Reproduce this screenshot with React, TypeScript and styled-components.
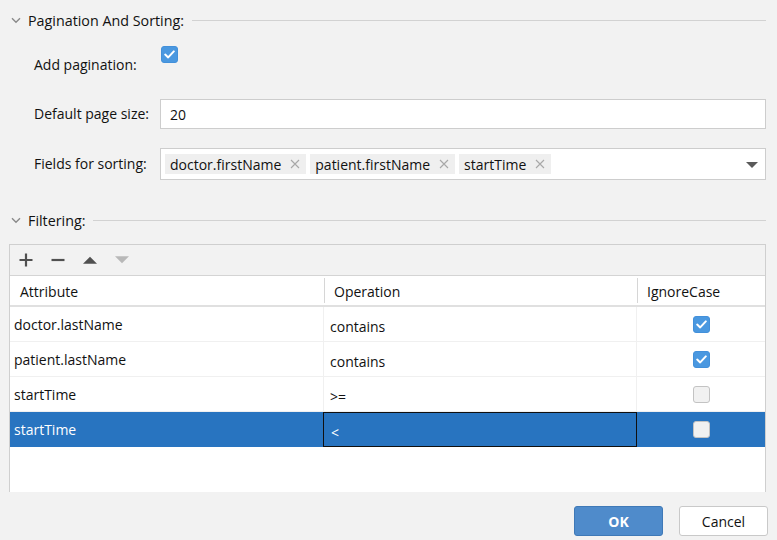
import React from "react";
import styled, { createGlobalStyle } from "styled-components";

const GlobalStyle = createGlobalStyle`
  html, body {
    margin: 0;
    padding: 0;
    background: #f2f2f2;
  }
  body {
    font-family: "Open Sans", "Noto Sans", sans-serif;
    font-size: 14px;
    color: #111;
  }
`;

const Chevron = () => (
  <svg width="10" height="7" viewBox="0 0 10 7">
    <path d="M1 1.2 L5 5.2 L9 1.2" fill="none" stroke="#8a8a8a" strokeWidth="1.4" />
  </svg>
);

const Check = () => (
  <svg width="11" height="9" viewBox="0 0 11 9">
    <path d="M1.2 4.6 L4.2 7.4 L9.8 1.4" fill="none" stroke="#fff" strokeWidth="2" strokeLinecap="round" strokeLinejoin="round" />
  </svg>
);

const Cross = () => (
  <svg width="10" height="10" viewBox="0 0 10 10">
    <path d="M1 1 L9 9 M9 1 L1 9" stroke="#a8a8a8" strokeWidth="1.1" />
  </svg>
);

const sorting = ["doctor.firstName", "patient.firstName", "startTime"];

const filters = [
  { attr: "doctor.lastName", op: "contains", ignore: true },
  { attr: "patient.lastName", op: "contains", ignore: true },
  { attr: "startTime", op: ">=", ignore: false },
  { attr: "startTime", op: "<", ignore: false, selected: true },
];

const App = () => {
  return (
    <>
      <GlobalStyle />
      <Page>
        <SectionHeader $top={10}>
          <Chevron />
          <SectionTitle>Pagination And Sorting:</SectionTitle>
          <Rule />
        </SectionHeader>

        <CheckRow>
          <Label>Add pagination:</Label>
          <CheckBox $checked $raised>
            <Check />
          </CheckBox>
        </CheckRow>

        <FieldRow $top={24}>
          <Label>Default page size:</Label>
          <TextInput>20</TextInput>
        </FieldRow>

        <FieldRow $top={19}>
          <Label>Fields for sorting:</Label>
          <TagInput>
            {sorting.map((s) => (
              <Tag key={s}>
                {s}
                <Cross />
              </Tag>
            ))}
            <DropArrow />
          </TagInput>
        </FieldRow>

        <SectionHeader $top={30}>
          <Chevron />
          <SectionTitle>Filtering:</SectionTitle>
          <Rule />
        </SectionHeader>

        <TablePanel>
          <Toolbar>
            <ToolIcon>
              <svg width="14" height="14" viewBox="0 0 14 14">
                <path d="M7 0.5 V13.5 M0.5 7 H13.5" stroke="#505050" strokeWidth="2.2" />
              </svg>
            </ToolIcon>
            <ToolIcon>
              <svg width="14" height="14" viewBox="0 0 14 14">
                <path d="M0.5 7 H13.5" stroke="#505050" strokeWidth="2.2" />
              </svg>
            </ToolIcon>
            <ToolIcon>
              <svg width="15" height="8" viewBox="0 0 15 8">
                <path d="M0 8 L7.5 0.5 L15 8 Z" fill="#505050" />
              </svg>
            </ToolIcon>
            <ToolIcon>
              <svg width="15" height="8" viewBox="0 0 15 8">
                <path d="M0 0 L7.5 7.5 L15 0 Z" fill="#b8b8b8" />
              </svg>
            </ToolIcon>
          </Toolbar>
          <Grid>
            <HeadCell>Attribute</HeadCell>
            <HeadCell $divider>Operation</HeadCell>
            <HeadCell $divider>IgnoreCase</HeadCell>
            {filters.map((f, i) => (
              <React.Fragment key={i}>
                <Cell $selected={f.selected}>{f.attr}</Cell>
                <OpCell $selected={f.selected}>{f.op}</OpCell>
                <CheckCell $selected={f.selected}>
                  <CheckBox $checked={f.ignore}>{f.ignore && <Check />}</CheckBox>
                </CheckCell>
              </React.Fragment>
            ))}
          </Grid>
        </TablePanel>

        <Buttons>
          <Button $primary>OK</Button>
          <Button>Cancel</Button>
        </Buttons>
      </Page>
    </>
  );
};

export default App;

const Page = styled.div`
  width: 777px;
  height: 540px;
  box-sizing: border-box;
  padding: 0 11px 0 9px;
  display: flex;
  flex-direction: column;
  overflow: hidden;
`;

const SectionHeader = styled.div<{ $top: number }>`
  margin-top: ${(p) => p.$top}px;
  height: 20px;
  display: flex;
  align-items: center;
  padding-left: 2px;

  svg {
    margin-right: 7px;
    margin-top: 1px;
  }
`;

const SectionTitle = styled.span`
  white-space: nowrap;
  font-size: 14.3px;
`;

const Rule = styled.div`
  flex: 1;
  height: 1px;
  background: #d2d2d2;
  margin-left: 8px;
`;

const CheckRow = styled.div`
  margin-top: 16px;
  display: flex;
  align-items: flex-start;
  padding-left: 25px;

  & > span {
    margin-top: 9px;
  }
`;

const Label = styled.span`
  width: 126px;
  flex-shrink: 0;
  white-space: nowrap;
  line-height: 20px;
`;

const CheckBox = styled.div<{ $checked?: boolean; $raised?: boolean }>`
  width: 17px;
  height: 17px;
  box-sizing: border-box;
  border-radius: 3px;
  display: flex;
  align-items: center;
  justify-content: center;
  background: ${(p) => (p.$checked ? "#4a98e0" : "#f1f1f1")};
  border: 1.5px solid ${(p) => (p.$checked ? "#4390da" : "#c3c3c3")};
  margin-left: ${(p) => (p.$raised ? "1px" : "0")};
`;

const FieldRow = styled.div<{ $top: number }>`
  margin-top: ${(p) => p.$top}px;
  display: flex;
  align-items: center;
  padding-left: 25px;
`;

const TextInput = styled.div`
  flex: 1;
  height: 30px;
  box-sizing: border-box;
  background: #fff;
  border: 1px solid #cdcdcd;
  display: flex;
  align-items: center;
  padding-left: 9px;
`;

const TagInput = styled.div`
  flex: 1;
  height: 32px;
  box-sizing: border-box;
  background: #fff;
  border: 1px solid #cdcdcd;
  display: flex;
  align-items: center;
  gap: 4px;
  padding: 0 0 0 4px;
`;

const Tag = styled.span`
  height: 20px;
  background: #efefef;
  display: flex;
  align-items: center;
  gap: 9px;
  padding: 0 6px 0 5px;
  white-space: nowrap;
`;

const DropArrow = styled.span`
  margin-left: auto;
  margin-right: 7px;
  width: 0;
  height: 0;
  border-left: 6px solid transparent;
  border-right: 6px solid transparent;
  border-top: 6px solid #5a5a5a;
  margin-top: 2px;
`;

const TablePanel = styled.div`
  margin-top: 14px;
  height: 248px;
  box-sizing: border-box;
  border: 1px solid #cfcfcf;
  border-bottom: none;
  display: flex;
  flex-direction: column;
  background: #fff;
`;

const Toolbar = styled.div`
  height: 30px;
  flex-shrink: 0;
  background: #f2f2f2;
  border-bottom: 1px solid #d4d4d4;
  display: flex;
  align-items: center;
  padding-left: 9px;
  gap: 18px;
`;

const ToolIcon = styled.span`
  width: 14px;
  height: 14px;
  display: flex;
  align-items: center;
  justify-content: center;
`;

const Grid = styled.div`
  display: grid;
  grid-template-columns: 314px 313px 1fr;
  grid-auto-rows: 35px;
  grid-template-rows: 31px;
  flex: 1;
  align-content: start;
  background: #fff;
`;

const HeadCell = styled.div<{ $divider?: boolean }>`
  display: flex;
  align-items: center;
  padding-left: 10px;
  padding-top: 2px;
  border-bottom: 2px solid #e0e0e0;
  position: relative;

  &::before {
    content: "";
    display: ${(p) => (p.$divider ? "block" : "none")};
    position: absolute;
    left: 0;
    top: 2px;
    bottom: 2px;
    width: 1px;
    background: #d6d6d6;
  }
`;

const Cell = styled.div<{ $selected?: boolean }>`
  display: flex;
  align-items: center;
  padding-left: 4px;
  background: ${(p) => (p.$selected ? "#2874c0" : "#fff")};
  color: ${(p) => (p.$selected ? "#fff" : "#111")};
  border-bottom: 1px solid ${(p) => (p.$selected ? "#2874c0" : "#f0f0f0")};
  border-right: 1px solid ${(p) => (p.$selected ? "#2874c0" : "#f0f0f0")};
`;

const OpCell = styled(Cell)`
  padding-left: 6px;
  padding-top: 5px;
  box-sizing: border-box;
  ${(p) => (p.$selected ? "border: 1px solid #101010; margin-left: -1px; padding-left: 7px;" : "")}
`;

const CheckCell = styled(Cell)`
  justify-content: center;
  padding-left: 0;
  border-right: none;
`;

const Buttons = styled.div`
  margin-top: 14px;
  margin-right: -2px;
  display: flex;
  justify-content: flex-end;
  gap: 16px;
`;

const Button = styled.button<{ $primary?: boolean }>`
  width: 89px;
  height: 30px;
  border-radius: 3px;
  font-family: "Open Sans", "Noto Sans", sans-serif;
  font-size: 14px;
  font-weight: ${(p) => (p.$primary ? 700 : 400)};
  color: ${(p) => (p.$primary ? "#fff" : "#111")};
  background: ${(p) => (p.$primary ? "#4f8bcb" : "#fff")};
  border: 1px solid ${(p) => (p.$primary ? "#3f79b7" : "#c9c9c9")};
  padding: 0 0 0 0;
  line-height: 30px;
`;
